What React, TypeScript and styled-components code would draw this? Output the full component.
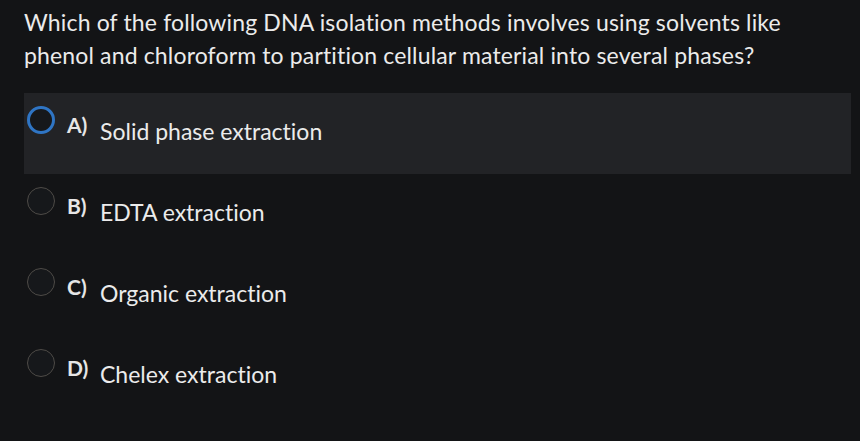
import React from 'react';
import styled, { createGlobalStyle } from 'styled-components';

const GlobalStyle = createGlobalStyle`
  html, body {
    margin: 0;
    padding: 0;
    background: #131416;
  }
  body {
    font-family: Lato, "Noto Sans", sans-serif;
    color: #e6e6e6;
    font-variant-ligatures: none;
  }
`;

const Page = styled.div`
  width: 860px;
  height: 441px;
  padding: 6px 9px 0 24px;
  box-sizing: border-box;
  overflow: hidden;
`;

const Question = styled.p`
  margin: 0 0 21px;
  font-size: 23px;
  line-height: 33px;
  letter-spacing: 0.15px;
  color: #ebebeb;
`;

const Options = styled.div`
  display: flex;
  flex-direction: column;
`;

const Option = styled.div<{ $active?: boolean }>`
  display: flex;
  align-items: flex-start;
  height: 81px;
  box-sizing: border-box;
  padding: 13px 0 0 3px;
  background: ${(p) => (p.$active ? '#222326' : 'transparent')};
`;

const Radio = styled.span<{ $active?: boolean }>`
  flex: none;
  width: 28px;
  height: 28px;
  box-sizing: border-box;
  border-radius: 50%;
  border: ${(p) => (p.$active ? '3px solid #2f75c4' : '1.5px solid #4e4b47')};
  background: #16181b;
`;

const Letter = styled.span`
  margin: 6px 0 0 12px;
  font-size: 21px;
  font-weight: 700;
  line-height: 25px;
  width: 33px;
  flex: none;
`;

const Label = styled.span`
  margin-top: 11px;
  font-size: 23px;
  line-height: 28px;
  color: #ebebeb;
`;

const options = [
  { key: 'A', text: 'Solid phase extraction' },
  { key: 'B', text: 'EDTA extraction' },
  { key: 'C', text: 'Organic extraction' },
  { key: 'D', text: 'Chelex extraction' },
];

const App = () => {
  const selected = 'A';
  return (
    <>
      <GlobalStyle />
      <Page>
        <Question>
          Which of the following DNA isolation methods involves using solvents like
          <br />
          phenol and chloroform to partition cellular material into several phases?
        </Question>
        <Options>
          {options.map((o) => (
            <Option key={o.key} $active={o.key === selected}>
              <Radio $active={o.key === selected} />
              <Letter>{o.key})</Letter>
              <Label>{o.text}</Label>
            </Option>
          ))}
        </Options>
      </Page>
    </>
  );
};

export default App;
